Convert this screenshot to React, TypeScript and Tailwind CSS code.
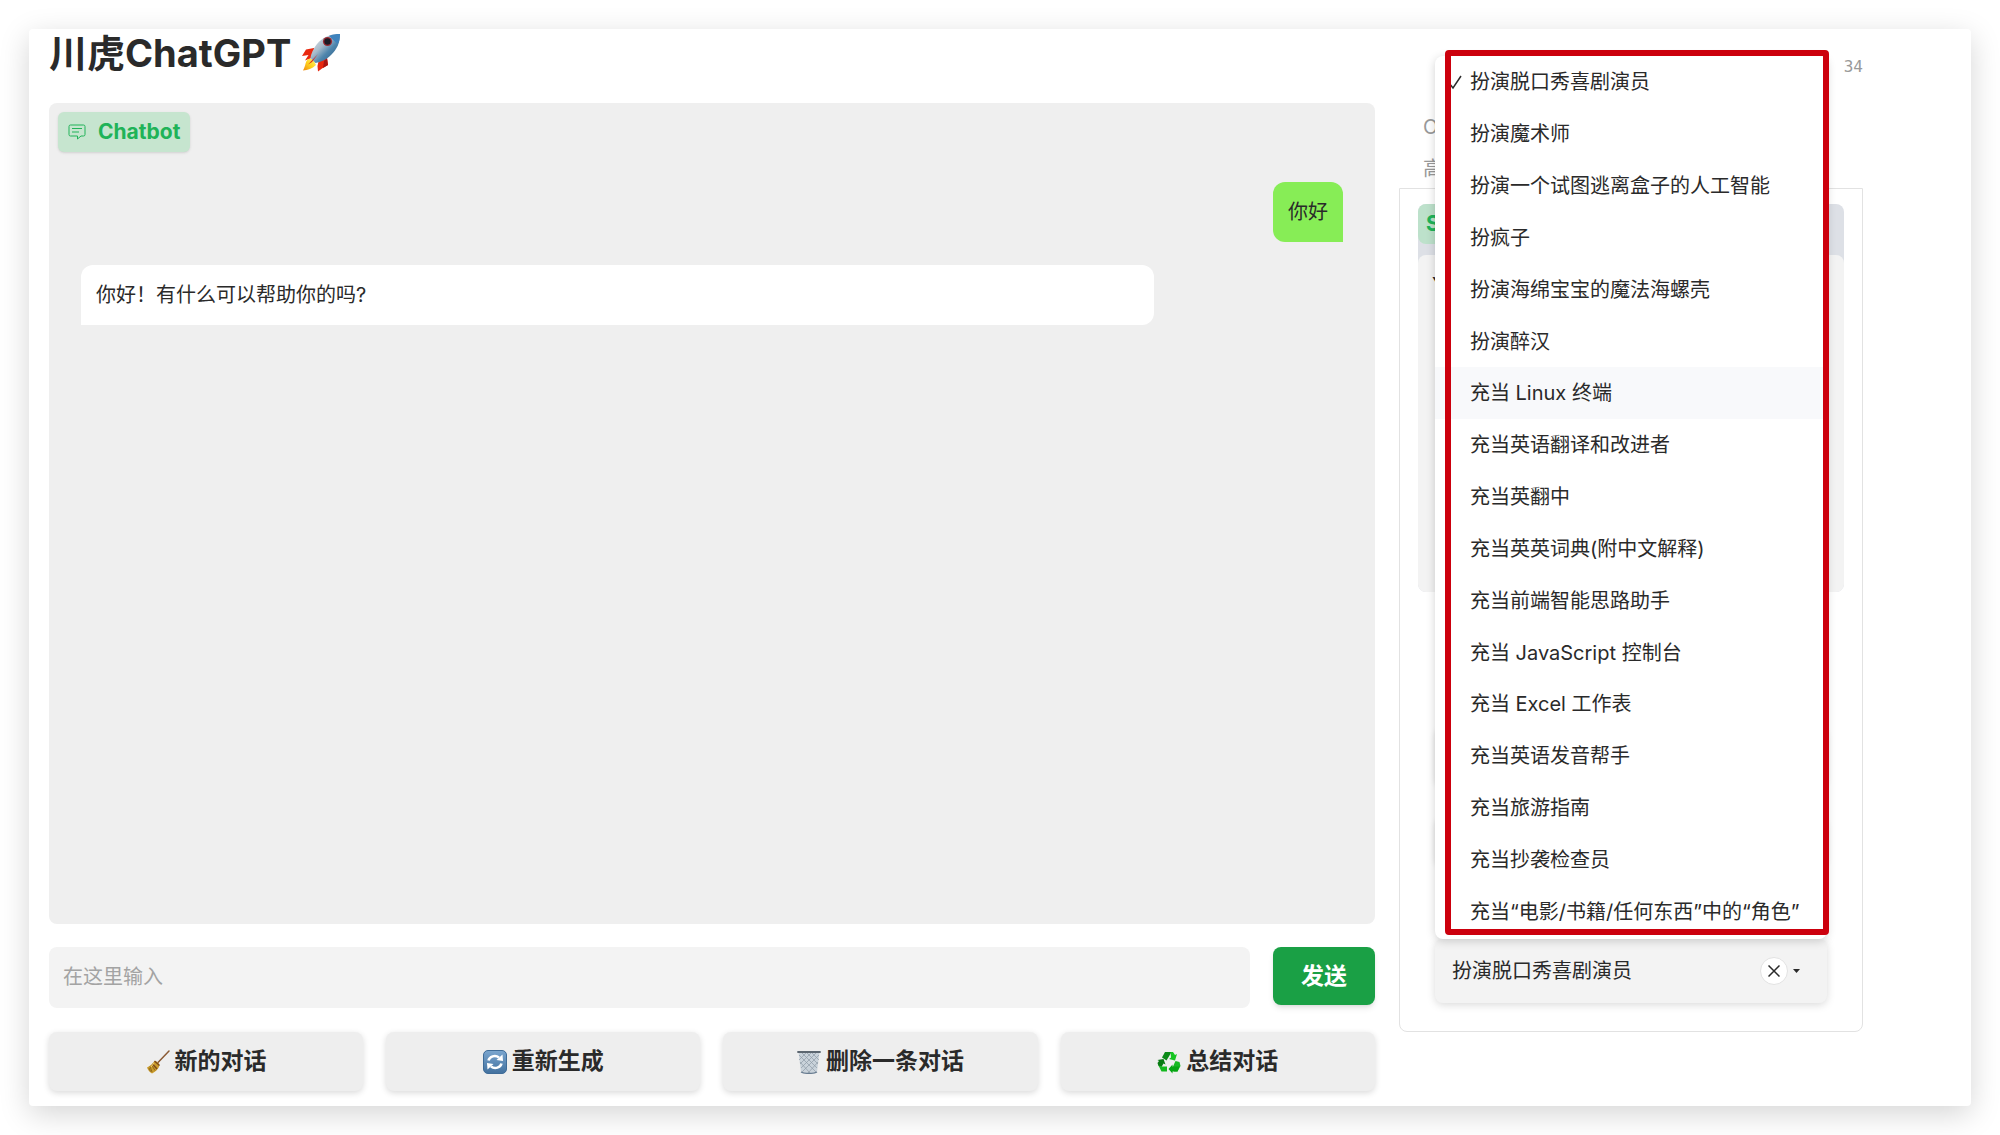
import React from 'react';

interface IconProps {
  className?: string;
}

const RocketIcon: React.FC<IconProps> = ({ className }) => (
  <svg viewBox="0 0 40 40" className={className} aria-hidden="true">
    <defs>
      <linearGradient id="rocketBody" x1="0" y1="0" x2="1" y2="1">
        <stop offset="0" stopColor="#e4eaf0" />
        <stop offset="0.4" stopColor="#a9bccb" />
        <stop offset="0.6" stopColor="#4f86ad" />
        <stop offset="1" stopColor="#1f4f7a" />
      </linearGradient>
      <linearGradient id="rocketFlame" x1="1" y1="0" x2="0" y2="1">
        <stop offset="0" stopColor="#fff27a" />
        <stop offset="0.5" stopColor="#ffd21c" />
        <stop offset="1" stopColor="#f08a12" />
      </linearGradient>
    </defs>
    <path d="M13 15 L5 16.500 L1 23 L7.500 22 L4 27.500 L13 24 Z" fill="#e8280f" />
    <path d="M26 25 L27 32 L21 35.500 L17 38.500 L16.500 33 L18 26 Z" fill="#e8280f" />
    <path d="M26 25 L27 32 L22 35 L23 28 Z" fill="#a81512" />
    <path d="M7 26 C4 29 5 32 2 37.500 C7 37 11 36 15 32 L12 26 Z" fill="url(#rocketFlame)" />
    <path d="M39 1 C29 1 22 4 16 11 C12 16 10 21 9.500 25 L14.500 30 C20 29 25 27 30 22 C36 16 39 10 39 1 Z" fill="url(#rocketBody)" />
    <path d="M39 1 C35 1 31 1.500 28 3 L36.500 11 C38.500 8 39 5 39 1 Z" fill="#3f83bd" />
    <path d="M17 21 L7 31.500 L11 29 Z" fill="#d9261c" />
    <circle cx="26.500" cy="8.500" r="4.600" fill="#9a2a33" />
    <circle cx="26.500" cy="8.500" r="3.200" fill="#1c1a24" />
  </svg>
);

const BroomIcon: React.FC<IconProps> = ({ className }) => (
  <svg viewBox="0 0 24 24" className={className} aria-hidden="true">
    <path d="M23 1 L12 12.500" stroke="#8a5a34" strokeWidth="1.500" strokeLinecap="round" />
    <path d="M8.500 11 C10 10.500 13.500 13 13.500 15.500 C12.500 19 9.500 22 6 23.500 C4 22.500 2 20.500 1 17.500 C4 16 6.500 14 8.500 11 Z" fill="#c99b2c" />
    <path d="M8.500 11 L13.500 15.500 M6.500 14 L11 19" stroke="#7c4a1c" strokeWidth="1.400" />
    <path d="M4 16.500 L6 22 M3 18 L4.500 21.500 M6 15.500 L9 20.500" stroke="#8a641a" strokeWidth="0.900" />
    <path d="M8 13 L5 17" stroke="#f0d070" strokeWidth="1" />
  </svg>
);

const RefreshIcon: React.FC<IconProps> = ({ className }) => (
  <svg viewBox="0 0 24 24" className={className} aria-hidden="true">
    <defs>
      <linearGradient id="refreshTile" x1="0" y1="0" x2="0" y2="1">
        <stop offset="0" stopColor="#7ba6cf" />
        <stop offset="1" stopColor="#42719f" />
      </linearGradient>
    </defs>
    <rect x="0.500" y="0.500" width="23" height="23" rx="4.500" fill="url(#refreshTile)" stroke="#3f6c98" />
    <path d="M5.500 10.500 C6.500 6.500 12 4.500 16 7.500" fill="none" stroke="#fff" strokeWidth="2.600" />
    <path d="M18.500 13.500 C17.500 17.500 12 19.500 8 16.500" fill="none" stroke="#fff" strokeWidth="2.600" />
    <path d="M19.500 4.500 L20 11 L13.500 10 Z" fill="#fff" />
    <path d="M4.500 19.500 L4 13 L10.500 14 Z" fill="#fff" />
  </svg>
);

const TrashIcon: React.FC<IconProps> = ({ className }) => (
  <svg viewBox="0 0 24 24" className={className} aria-hidden="true">
    <path d="M1.500 2 L4 22 C7 24 17 24 20 22 L22.500 2 Z" fill="#c9d2da" />
    <path
      d="M2 5 L19 22 M5 3 L20 18 M10 3 L21 14 M15 3 L22 10 M3 12 L13 23 M22 5 L5 22 M19 3 L4 18 M14 3 L3 14 M9 3 L2 10 M21 12 L11 23"
      stroke="#8e9ba6"
      strokeWidth="0.700"
    />
    <path d="M1 2 H23" stroke="#5c6670" strokeWidth="1.800" strokeLinecap="round" />
    <path d="M4 22 C7 23.800 17 23.800 20 22" fill="none" stroke="#687c90" strokeWidth="1.400" />
  </svg>
);

const RecycleIcon: React.FC<IconProps> = ({ className }) => (
  <svg viewBox="0 0 24 24" className={className} aria-hidden="true">
    <path d="M8 2 H14.500 L12.500 5.500 L9.500 10.500 L5 7.500 Z" fill="#0a8a17" />
    <path d="M13.500 2 H16 L18 5 L20 4 L18 10.500 L12 9 L14 7.500 Z" fill="#16c522" />
    <path d="M22.500 12 L23.500 16 L20.500 21.500 L17 21.500 L16 16.500 L18.500 11 Z" fill="#16b921" />
    <path d="M20.500 21.500 H15.500 V23.500 L11.500 19 L15.500 14.500 V16.500 H22.500 Z" fill="#05a512" />
    <path d="M1.500 16 L0.500 13 L2 11 L0.500 10 L6.500 9 L8.500 14.500 L6.500 13.500 L4.500 17 Z" fill="#087a14" />
    <path d="M1.500 15.500 L4.500 21.500 H10 V16.500 H4.500 Z" fill="#14b81f" />
  </svg>
);

const ChatIcon: React.FC<IconProps> = ({ className }) => (
  <svg viewBox="0 0 18 16" className={className} aria-hidden="true" fill="none" stroke="currentColor" strokeLinejoin="round">
    <path d="M2.500 1 H15.500 Q17 1 17 2.500 V10.500 Q17 12 15.500 12 H13 L9.500 15 V12 H2.500 Q1 12 1 10.500 V2.500 Q1 1 2.500 1 Z" />
    <path d="M4 4.500 H14 M4 8 H11" />
  </svg>
);

const actions = [
  { label: '新的对话', Icon: BroomIcon },
  { label: '重新生成', Icon: RefreshIcon },
  { label: '删除一条对话', Icon: TrashIcon },
  { label: '总结对话', Icon: RecycleIcon },
];

const templates = [
  '扮演脱口秀喜剧演员',
  '扮演魔术师',
  '扮演一个试图逃离盒子的人工智能',
  '扮疯子',
  '扮演海绵宝宝的魔法海螺壳',
  '扮演醉汉',
  '充当 Linux 终端',
  '充当英语翻译和改进者',
  '充当英翻中',
  '充当英英词典(附中文解释)',
  '充当前端智能思路助手',
  '充当 JavaScript 控制台',
  '充当 Excel 工作表',
  '充当英语发音帮手',
  '充当旅游指南',
  '充当抄袭检查员',
  '充当“电影/书籍/任何东西”中的“角色”',
];

const selected = templates[0];
const hovered = templates[6];

const ChatPanel: React.FC = () => (
  <section className="flex flex-1 flex-col rounded-lg bg-[#efefef]">
    <div className="ml-[9px] mt-[9px] flex h-10 items-center gap-3 self-start rounded-md bg-[#c6e5cf] px-[10px] text-[21px] font-bold text-[#20b358] shadow-sm">
      <ChatIcon className="h-4 w-[18px]" />
      <h2>Chatbot</h2>
    </div>
    <div className="mt-[30px] flex flex-col gap-[23px] px-8">
      <p className="self-end rounded-xl rounded-br-none bg-[#87ed56] px-[15px] py-[15px] leading-[30px]">你好</p>
      <p className="w-[85%] rounded-xl rounded-bl-none bg-white px-[15px] py-[15px] leading-[30px]">你好！有什么可以帮助你的吗?</p>
    </div>
  </section>
);

const TemplateMenu: React.FC = () => (
  <div className="absolute inset-x-0 bottom-full z-10">
    <ul role="listbox" aria-label="Prompt" className="flex h-[883px] flex-col rounded-lg bg-white pb-[2px] shadow-[0_2px_10px_rgba(0,0,0,0.18)]">
      {templates.map((name) => (
        <li
          key={name}
          role="option"
          aria-selected={name === selected}
          className={`flex flex-1 items-center whitespace-nowrap pt-[1px] ${name === hovered ? 'bg-[#f8f9fb]' : ''}`}
        >
          <span className="flex w-[35px] justify-end pr-2">
            {name === selected && (
              <svg viewBox="0 0 14 16" className="h-4 w-[14px]" fill="none" stroke="currentColor" strokeWidth="1.500" aria-hidden="true">
                <path d="M1 9 L5 14 L13 2" />
              </svg>
            )}
          </span>
          {name}
        </li>
      ))}
    </ul>
    {/* highlight frame around the list */}
    <div className="pointer-events-none absolute -right-[2px] -top-[6px] bottom-1 left-[10px] rounded-[4px] border-[6px] border-[#cc000d]" />
  </div>
);

const Sidebar: React.FC = () => (
  <aside className="flex flex-7 flex-col pb-[74px]">
    <p className="mt-[25px] text-right font-['DejaVu_Sans_Mono',monospace] text-base leading-[26px] text-[#999]">34</p>
    <p className="ml-6 mt-8 text-xl leading-[30px] text-[#999]">O</p>
    <p className="ml-6 mt-3 text-xl leading-[30px] text-[#999]">高</p>

    <div className="mt-1 flex flex-1 flex-col rounded-b-lg border border-[#e2e2e2] pb-7 pt-[15px]">
      <div className="mx-[18px] flex flex-col rounded-lg bg-[#dde0e6]">
        <label htmlFor="system" className="h-10 w-40 rounded-lg bg-[#bde1cb] px-2 text-[21px] font-bold leading-10 text-[#20b358]">
          S
        </label>
        <textarea
          id="system"
          className="mt-[11px] block h-[337px] w-full resize-none rounded-lg bg-[#f3f3f3] px-[14px] py-4 outline-none"
          defaultValue="Y"
        />
      </div>

      <div className="mx-[35px] mt-auto flex flex-col">
        <div className="h-[58px] rounded-lg bg-[#f3f3f3] shadow-[0_2px_6px_rgba(0,0,0,0.12)]" />
        <div className="mb-[74px] mt-8 h-[48px] rounded-lg bg-[#efefef] shadow-[0_2px_6px_rgba(0,0,0,0.12)]" />
        <div className="relative flex h-16 items-center rounded-lg bg-[#f3f3f3] pl-[17px] pr-[27px] shadow-[0_2px_8px_rgba(0,0,0,0.15)]">
          <span className="flex-1">{selected}</span>
          <button aria-label="清除" className="flex size-7 items-center justify-center rounded-full border border-[#e2e2e2] bg-white">
            <svg viewBox="0 0 12 12" className="size-3" stroke="currentColor" strokeWidth="1.500" aria-hidden="true">
              <path d="M0.500 0.500 L11.500 11.500 M11.500 0.500 L0.500 11.500" />
            </svg>
          </button>
          <svg viewBox="0 0 7 4" className="ml-[5px] h-1 w-[7px]" fill="currentColor" aria-hidden="true">
            <path d="M0 0 H7 L3.500 4 Z" />
          </svg>
          <TemplateMenu />
        </div>
      </div>
    </div>
  </aside>
);

const App: React.FC = () => {
  return (
    <div className="flex min-h-screen flex-col bg-white p-[29px] font-['Inter','Noto_Sans_CJK_SC',sans-serif] text-xl text-[#2a2a2a]">
      <main className="flex flex-1 gap-6 rounded-sm bg-white pl-5 pr-[108px] shadow-[0_8px_30px_rgba(0,0,0,0.17)]">
        <div className="flex flex-20 flex-col pb-[15px]">
          <h1 className="mb-[26px] flex items-center gap-[10px] text-[38px] font-bold leading-[48px]">
            川虎ChatGPT
            <RocketIcon className="size-10" />
          </h1>

          <ChatPanel />

          <form className="mt-[23px] flex items-start gap-[23px]" onSubmit={(e) => e.preventDefault()}>
            <input
              type="text"
              aria-label="在这里输入"
              placeholder="在这里输入"
              className="h-[61px] flex-1 rounded-lg bg-[#f3f3f3] px-[14px] pb-[2px] outline-none placeholder:text-[#a3a3a3]"
            />
            <button type="submit" className="h-[58px] w-[102px] rounded-lg bg-[#1aa045] text-[23px] font-bold text-white shadow-md">
              发送
            </button>
          </form>

          <div className="mt-6 grid grid-cols-4 gap-[23px]">
            {actions.map(({ label, Icon }) => (
              <button key={label} className="flex h-[59px] items-center justify-center gap-[5px] rounded-lg bg-[#eee] text-[23px] font-bold shadow-[0_2px_6px_rgba(0,0,0,0.15)]">
                <Icon className="size-6" />
                {label}
              </button>
            ))}
          </div>
        </div>

        <Sidebar />
      </main>
    </div>
  );
};

export default App;
